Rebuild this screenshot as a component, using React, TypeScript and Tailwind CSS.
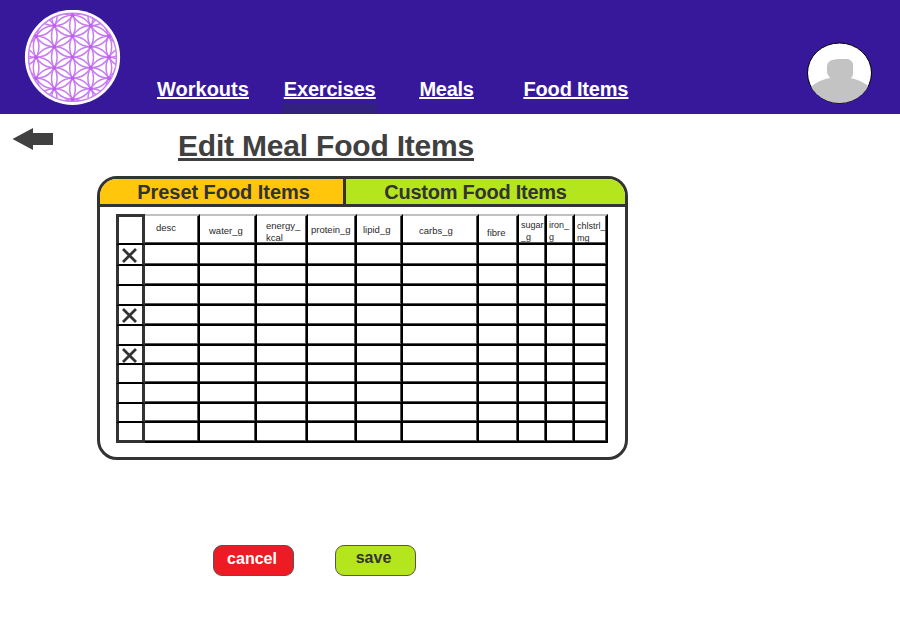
const headers = [
  { t: ["desc"], c: "pl-[11px] pt-[6px] text-[9.5px]" },
  { t: ["water_g"], c: "pl-[9px] pt-[9px] text-[9.5px]" },
  { t: ["energy_", "kcal"], c: "pl-[9px] pt-[4px] text-[9.5px]" },
  { t: ["protein_g"], c: "pl-[3px] pt-[8px] text-[9.5px]" },
  { t: ["lipid_g"], c: "pl-[6px] pt-[8px] text-[9.5px]" },
  { t: ["carbs_g"], c: "pl-[16px] pt-[9px] text-[9.5px]" },
  { t: ["fibre"], c: "pl-[8px] pt-[11px] text-[9.5px]" },
  { t: ["sugar", "_g"], c: "pl-[2px] pt-[3px] text-[9px]" },
  { t: ["iron_", "g"], c: "pl-[2px] pt-[3px] text-[9px]" },
  { t: ["chlstrl_", "mg"], c: "pl-[2px] pt-[4px] text-[9px]" },
];
const widths = [55, 57, 51, 49, 46, 76, 40, 28, 28, 33];
const checked = [1, 4, 6];
const R = 21;
const centers: [number, number][] = [];
for (let q = -3; q <= 3; q++) {
  for (let r = -3; r <= 3; r++) {
    const x = q + r / 2;
    const y = (r * Math.sqrt(3)) / 2;
    if (Math.hypot(x, y) < 3.01) centers.push([y * R, x * R]);
  }
}

function Flower() {
  return (
    <svg width="97" height="96" viewBox="-48.5 -47.3 97 96" className="shrink-0">
      <defs>
        <clipPath id="fl"><circle r="44" /></clipPath>
      </defs>
      <circle r="47.6" fill="#fff" />
      <circle r="44" fill="none" stroke="#cb82f3" strokeWidth="1.4" />
      <g clipPath="url(#fl)">
        <g fill="none" stroke="#c87cf2" strokeWidth="1.5">
          {centers.map(([x, y], i) => (
            <circle key={i} cx={x} cy={y} r={R} />
          ))}
        </g>
        <g fill="#c060ee">
          {centers.map(([x, y], i) => (
            <circle key={i} cx={x} cy={y} r="2" />
          ))}
        </g>
      </g>
    </svg>
  );
}

function Avatar() {
  return (
    <svg width="66" height="62" viewBox="0 0 66 62">
      <defs>
        <clipPath id="av"><ellipse cx="33.5" cy="31" rx="32" ry="30" /></clipPath>
      </defs>
      <ellipse cx="33.5" cy="31" rx="32" ry="30" fill="#fff" stroke="#000" strokeWidth="1" />
      <g clipPath="url(#av)" fill="#c3c3c3">
        <path d="M21 25c0-4 2-6 5-7l6-1h8c4 0 6 2 7 5v10c0 2-2 4-3 5H25c-2-2-4-5-4-7z" />
        <ellipse cx="34" cy="59" rx="36" ry="24" />
      </g>
    </svg>
  );
}

function Mark() {
  return (
    <svg width="15" height="15" viewBox="0 0 15 15" fill="none" stroke="#333" strokeWidth="2.8" className="mr-[2px] mt-[1px]">
      <path d="M1 1l13 13M14 1L1 14" />
    </svg>
  );
}

export default function App() {
  const font = { fontFamily: '"Liberation Sans", Arial, sans-serif' };
  return (
    <div className="relative w-[900px] h-[626px] bg-white overflow-hidden" style={font}>
      <header className="h-[114px] bg-[#38189a] flex items-start pl-[24px] pt-[10px] pr-[28px]">
        <Flower />
        <nav className="flex items-end h-[91px] ml-[36px] text-white text-[20px] font-bold underline leading-[23px]">
          <a className="mr-[35px]">Workouts</a>
          <a className="mr-[44px] tracking-[-0.2px]">Exercises</a>
          <a className="mr-[50px] tracking-[-0.3px]">Meals</a>
          <a className="tracking-[-0.2px]">Food Items</a>
        </nav>
        <div className="ml-auto mt-[32px] flex"><Avatar /></div>
      </header>
      <div className="absolute left-[282px] top-[103px] w-[95px] h-[11px] bg-[#33217f]" />
      <main>
        <div className="flex items-start h-[62px]">
          <svg width="41" height="24" viewBox="0 0 41 24" className="ml-[12px] mt-[13px] shrink-0">
            <path d="M0.5 12L21 1v5h20v12H21v5z" fill="#404040" />
          </svg>
          <h1 className="ml-[125px] mt-[15px] text-[30px] leading-[34px] font-bold underline text-[#404040] tracking-[-0.2px]">Edit Meal Food Items</h1>
        </div>
        <section className="ml-[97px] w-[531px] h-[284px] border-[3px] border-[#333] rounded-[20px] overflow-hidden">
          <div className="flex h-[28px] border-b-[3px] border-[#333] text-[20px] leading-[27px] font-bold text-[#333] text-center">
            <div className="w-[246px] bg-[#ffc60b] border-r-[3px] border-[#333] pl-[4px] tracking-[-0.05px]">Preset Food Items</div>
            <div className="flex-1 bg-[#b5e61d] pr-[20px] tracking-[-0.25px]">Custom Food Items</div>
          </div>
          <div className="ml-[16px] mt-[7px]">
            <div className="grid grid-cols-[29px_55px_57px_51px_49px_46px_76px_40px_28px_28px_33px] grid-rows-[31px_21px_20px_20px_20px_20px_19px_19px_20px_19px_20px] w-[492px]">
              <div className="border-[3px] border-[#333] border-b-[2px] border-b-black" />
              {headers.map((h, i) => (
                <div
                  key={i}
                  className={`border-t-[2px] border-t-[#c0c0c0] border-b-[2px] border-b-black border-r-[2px] border-r-black shadow-[inset_-1px_-1px_0_#555] leading-[12px] text-[#2a2a2a] whitespace-nowrap ${h.c}`}
                >
                  {h.t.map((l) => (
                    <div key={l}>{l}</div>
                  ))}
                </div>
              ))}
              {Array.from({ length: 10 }).map((_, r) => (
                <div key={r} className="contents">
                  <div className={`border-x-[3px] border-x-[#333] flex items-center justify-center ${r === 9 ? "border-b-[3px] border-b-[#333]" : "border-b-[2px] border-b-black"}`}>
                    {checked.includes(r + 1) && <Mark />}
                  </div>
                  {widths.map((_, c) => (
                    <div key={c} className="border-b-[2px] border-b-black border-r-[2px] border-r-black shadow-[inset_-1px_-1px_0_#555]" />
                  ))}
                </div>
              ))}
            </div>
          </div>
        </section>
        <div className="flex ml-[213px] mt-[85px] gap-[41px] text-[16px] font-bold">
          <button className="w-[81px] h-[31px] rounded-[9px] bg-[#ed1c24] border border-[#555] text-white leading-[26px] pb-[3px] pr-[3px]">cancel</button>
          <button className="w-[81px] h-[31px] rounded-[9px] bg-[#b5e61d] border border-[#555] text-[#333] leading-[24px] pb-[5px] pr-[4px]">save</button>
        </div>
      </main>
    </div>
  );
}
